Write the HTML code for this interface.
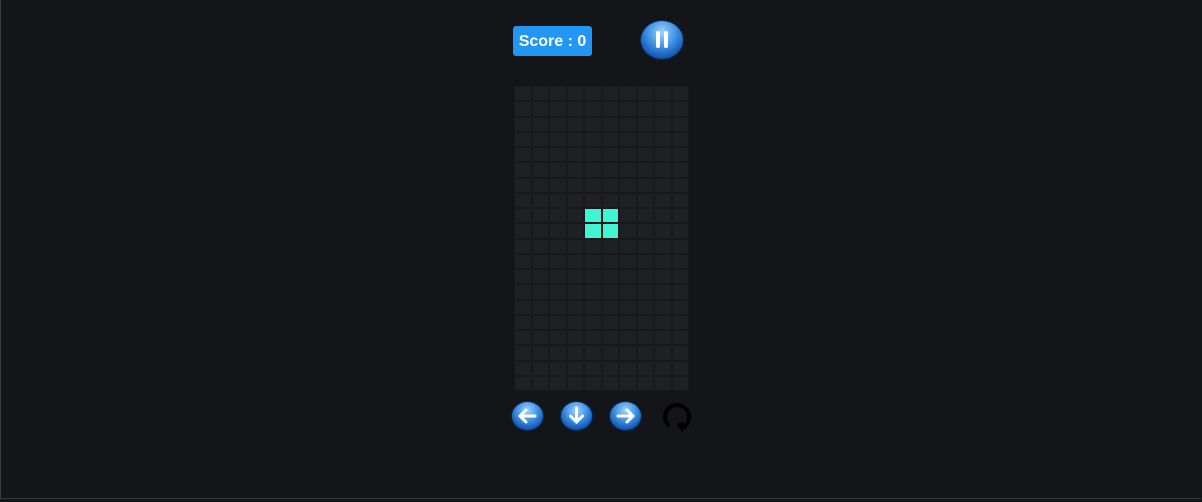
<!DOCTYPE html>
<html><head><style>
html,body{margin:0;padding:0;width:1202px;height:502px;overflow:hidden;background:#141519;font-family:"Liberation Sans",sans-serif;}
.frame{position:absolute;left:0;top:0;width:1201px;height:499px;border-left:1px solid #3a3b3f;border-bottom:1px solid #3a3b3f;box-sizing:border-box;}
.score{position:absolute;left:513px;top:26px;width:79px;height:30px;background:#2196f3;border-radius:3px;color:#fff;font-weight:bold;font-size:16px;line-height:31px;text-align:center;}
#grid{position:absolute;left:514px;top:86px;width:175px;height:305px;background:#18191c;display:grid;grid-template-columns:repeat(10,1fr);grid-template-rows:repeat(20,1fr);}
#grid div{background:#1f2023;margin:1px;}
#grid div.on{background:#3ff5d2;}
.btn{position:absolute;border-radius:50%;background:radial-gradient(circle at 50% 30%,#9fd4ff 0%,#3a8de0 45%,#0b4fa8 80%,#062f6e 100%);box-shadow:0 0 0 1px #0a2a5a;}
</style></head><body>
<div class="frame"></div>
<div class="score">Score : 0</div>
<div class="btn" style="left:641px;top:21px;width:42px;height:38px;">
<svg width="42" height="38"><rect x="15" y="10" width="4" height="17" rx="2" fill="#fff"/><rect x="23" y="10" width="4" height="17" rx="2" fill="#fff"/></svg></div>
<div id="grid"></div>
<div class="btn" style="left:512px;top:402px;width:31px;height:28px;"><svg width="31" height="28"><path d="M23 14H9M14 8l-6 6 6 6" stroke="#fff" stroke-width="3" fill="none" stroke-linecap="round"/></svg></div>
<div class="btn" style="left:561px;top:402px;width:31px;height:28px;"><svg width="31" height="28"><path d="M15.5 6v14M9.5 14l6 6 6-6" stroke="#fff" stroke-width="3" fill="none" stroke-linecap="round"/></svg></div>
<div class="btn" style="left:610px;top:402px;width:31px;height:28px;"><svg width="31" height="28"><path d="M8 14h14M17 8l6 6-6 6" stroke="#fff" stroke-width="3" fill="none" stroke-linecap="round"/></svg></div>
<svg style="position:absolute;left:658px;top:400px" width="36" height="36"><path d="M11 26A12 12 0 1 1 24 28" stroke="#000" stroke-width="4" fill="none"/><path d="M18 24l7 9 1-11z" fill="#000"/></svg>
<script>
var g=document.getElementById('grid');for(var r=0;r<20;r++)for(var c=0;c<10;c++){var d=document.createElement('div');if((r==8||r==9)&&(c==4||c==5))d.className='on';g.appendChild(d);}
</script>
</body></html>
